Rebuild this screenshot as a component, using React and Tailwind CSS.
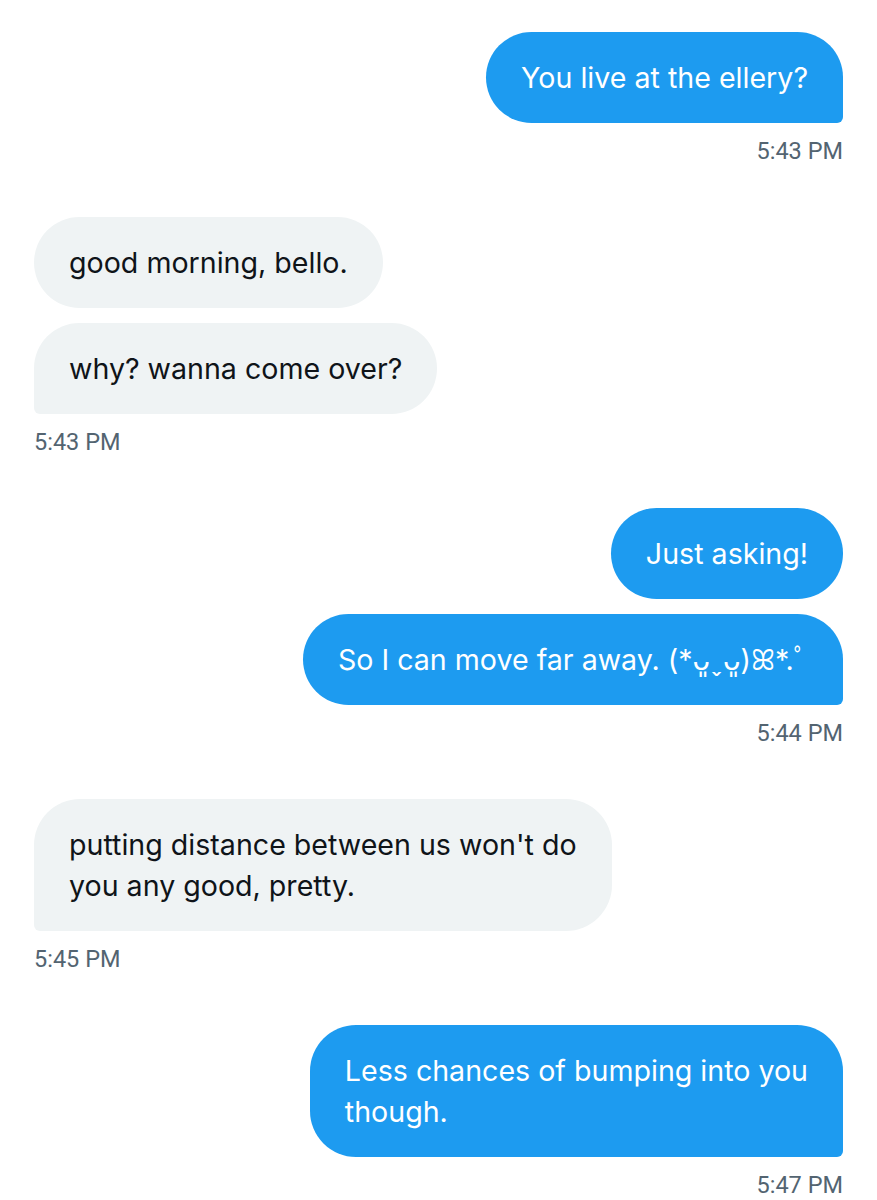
const messages = [
  { side: 'me', time: '5:43 PM', lines: ['You live at the ellery?'] },
  { side: 'them', time: '5:43 PM', lines: ['good morning, bello.', 'why? wanna come over?'] },
  { side: 'me', time: '5:44 PM', lines: ['Just asking!', 'So I can move far away. (*ᴗ͈ˬᴗ͈)ꕤ*.ﾟ'] },
  { side: 'them', time: '5:45 PM', lines: ["putting distance between us won't do\nyou any good, pretty."] },
  { side: 'me', time: '5:47 PM', lines: ['Less chances of bumping into you\nthough.'] },
];

function Bubble({ mine, last, children }) {
  // last bubble of a group gets the sharp corner on the sender's side
  let corner = 'rounded-[46px]';
  if (last) corner = mine ? 'rounded-[46px] rounded-br-[6px]' : 'rounded-[46px] rounded-bl-[6px]';
  return (
    <div
      className={`whitespace-pre-line px-[35px] py-[25px] text-[28.6px] leading-[41px] ${corner} ${
        mine ? 'bg-[#1d9bf0] text-white' : 'bg-[#eff3f4] text-[#0f1419]'
      }`}
    >
      {children}
    </div>
  );
}

export default function App() {
  return (
    <div
      className="min-h-[1200px] bg-white px-[34px] pt-[32px] flex flex-col gap-[52px]"
      style={{ fontFamily: 'Inter, "DejaVu Sans", "Noto Sans CJK JP", sans-serif' }}
    >
      {messages.map((group, i) => {
        const mine = group.side === 'me';
        return (
          <div key={i} className={`flex flex-col ${mine ? 'items-end' : 'items-start'}`}>
            <div className={`flex flex-col gap-[15px] ${mine ? 'items-end' : 'items-start'}`}>
              {group.lines.map((line, j) => (
                <Bubble key={j} mine={mine} last={j === group.lines.length - 1}>
                  {line}
                </Bubble>
              ))}
            </div>
            <div
              className="mt-[14px] text-[23.5px] leading-[28px] text-[#536471]"
              style={{ fontFamily: 'Roboto, Arial, sans-serif' }}
            >
              {group.time}
            </div>
          </div>
        );
      })}
    </div>
  );
}
